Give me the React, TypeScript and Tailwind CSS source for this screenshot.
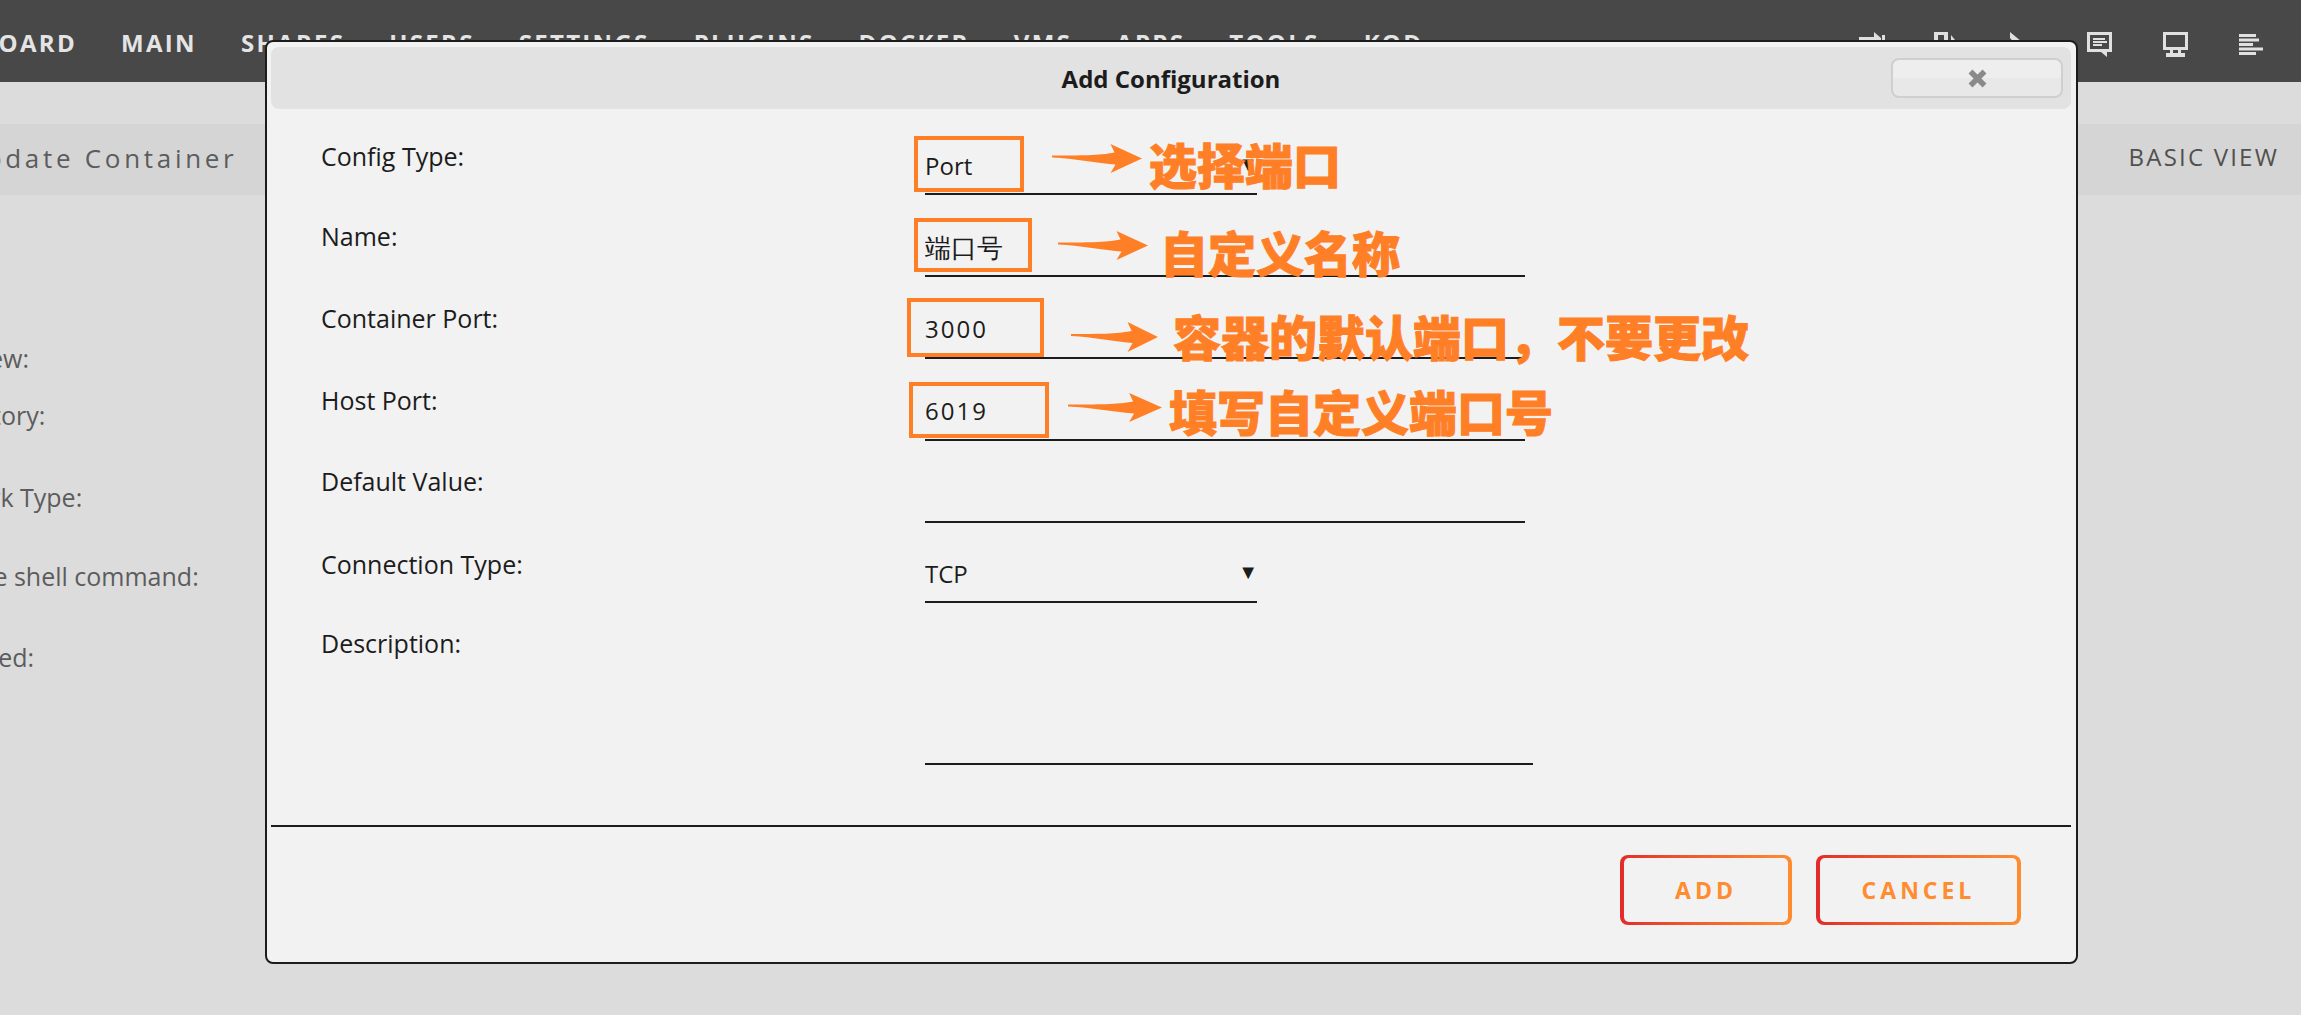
const navItems = ['DASHBOARD', 'MAIN', 'SHARES', 'USERS', 'SETTINGS', 'PLUGINS', 'DOCKER', 'VMS', 'APPS', 'TOOLS', 'KOD'];

const sans = 'font-["Open_Sans",sans-serif]';

function ChatIcon() {
  return (
    <svg width="25" height="25" viewBox="0 0 25 25" fill="#e0e0e0">
      <path fillRule="evenodd" d="M0 0h25v20h-5v5l-6-5H0zM3 3v14h19V3z" />
      <rect x="6" y="6" width="12" height="2" />
      <rect x="6" y="9" width="14" height="2" />
      <rect x="6" y="12" width="9" height="2" />
    </svg>
  );
}

function MonitorIcon() {
  return (
    <svg width="25" height="25" viewBox="0 0 25 25" fill="#e0e0e0">
      <path fillRule="evenodd" d="M0 0h25v18H0zM3 3v12h19V3z" />
      <rect x="7" y="18" width="3" height="3" />
      <rect x="15" y="18" width="3" height="3" />
      <rect x="3" y="21" width="19" height="4" />
    </svg>
  );
}

function AlignIcon() {
  return (
    <svg width="24" height="22" viewBox="0 0 24 22" fill="#e0e0e0">
      <rect x="0" y="0" width="17" height="3" />
      <rect x="0" y="4.5" width="20" height="3" />
      <rect x="0" y="9" width="14" height="3" />
      <rect x="0" y="13.5" width="24" height="3" />
      <rect x="0" y="18" width="17" height="3" />
    </svg>
  );
}

function SmallIcons() {
  return (
    <div className="flex items-start">
      <svg className="mt-[7px]" width="26" height="25" viewBox="0 0 26 25" fill="#e0e0e0">
        <path d="M0 5h15V0l7 6v4H0z" />
        <rect x="23" y="3" width="3" height="10" />
      </svg>
      <svg className="mt-[7px] ml-[49px]" width="21" height="25" viewBox="0 0 21 25" fill="#e0e0e0">
        <path fillRule="evenodd" d="M0 0h14v25H0zM4 3v22h6V3z" />
        <path d="M17 3l4 5v5h-4z" />
      </svg>
      <svg className="mt-[7px] ml-[55px]" width="12" height="25" viewBox="0 0 12 25" fill="#e0e0e0">
        <path d="M0 0l12 10v5H8L0 6z" />
      </svg>
    </div>
  );
}

type RowProps = {
  label: string;
  labelPad: string;
  rowHeight: string;
  lineWidth: string;
  value?: string;
  valueStyle?: string;
  caret?: boolean;
};

function FormRow({ label, labelPad, rowHeight, lineWidth, value, valueStyle, caret }: RowProps) {
  return (
    <div className={`flex ${rowHeight}`}>
      <div className={`w-[654px] shrink-0 pl-[50px] ${labelPad} text-[25px] leading-[30px] text-[#1c1c1c]`}>{label}</div>
      <div className={`relative flex h-full flex-col justify-end border-b-2 border-[#1c1c1c] ${lineWidth}`}>
        {value && <div className={`text-[24px] leading-[30px] text-[#1c1c1c] ${valueStyle}`}>{value}</div>}
        {caret && <span className="absolute right-[-1px] bottom-[19px] text-[20px] leading-5 text-[#1c1c1c]">▼</span>}
      </div>
    </div>
  );
}

function GradientButton({ label, width }: { label: string; width: string }) {
  return (
    <div className={`h-[70px] rounded-[8px] bg-linear-to-r from-[#e22b2b] to-[#ff8c2f] px-[4px] py-[3px] ${width}`}>
      <div className="flex h-full items-center justify-center rounded-[5px] bg-[#f2f2f2] text-[23px] font-bold tracking-[4px] text-[#ff8c2f]">
        {label}
      </div>
    </div>
  );
}

function Arrow({ className, w, h }: { className: string; w: number; h: number }) {
  const neck = w * 0.65;
  const mid = h / 2;
  return (
    <svg className={`absolute ${className}`} width={w} height={h} viewBox={`0 0 ${w} ${h}`} fill="#ff7f27">
      <path d={`M0 ${mid - 3}C${neck * 0.5} ${mid - 3} ${neck * 0.8} ${mid - 3} ${neck + 4} ${mid - 6}L${neck} 0L${w} ${mid}L${neck} ${h}L${neck + 5} ${mid + 6}C${neck * 0.7} ${mid + 4} ${neck * 0.4} ${mid} 0 ${mid - 1}Z`} />
    </svg>
  );
}

function Note({ className, text }: { className: string; text: string }) {
  return (
    <div className={`absolute font-["Noto_Sans_CJK_SC",sans-serif] font-black whitespace-nowrap text-[#ff7f27] [-webkit-text-stroke:1px_#ff7f27] ${className}`}>{text}</div>
  );
}

function OrangeBox({ className }: { className: string }) {
  return <div className={`absolute border-4 border-[#ff7f27] ${className}`} />;
}

export default function App() {
  return (
    <div className={`relative h-[1015px] w-[2301px] overflow-hidden bg-[#dcdcdc] ${sans}`}>
      {/* Top nav */}
      <div className="flex h-[82px] items-start overflow-hidden bg-[#484848] pt-[26px]">
        <div className="-ml-[95px] flex gap-[44px] text-[24px] leading-[34px] font-bold tracking-[2.3px] whitespace-nowrap text-[#e4e4e4]">
          {navItems.map((item) => (
            <span key={item}>{item}</span>
          ))}
        </div>
        <div className="ml-auto flex items-start pr-[38px]">
          <div className="-mt-[1px] mr-[65px]">
            <SmallIcons />
          </div>
          <div className="mt-[6px] flex items-start gap-[51px]">
            <ChatIcon />
            <MonitorIcon />
            <div className="mt-[2px]">
              <AlignIcon />
            </div>
          </div>
        </div>
      </div>

      {/* Page title band */}
      <div className="mt-[42px] flex h-[71px] items-center justify-between bg-[#d5d5d5] pr-[22px]">
        <span className="-mt-[3px] -ml-[37px] text-[26px] tracking-[3.7px] text-[#5c5c5c]">Update Container</span>
        <span className="-mt-[6px] text-[24px] tracking-[2.2px] text-[#505050]">BASIC VIEW</span>
      </div>

      {/* Template form behind the dialog */}
      <div className="-ml-[86px] flex flex-col pt-[148px] text-[25px] leading-[30px] text-[#5c5c5c]">
        <span className="mb-[27px]">Overview:</span>
        <span className="mb-[52px]">Repository:</span>
        <span className="mb-[49px]">Network Type:</span>
        <span className="mb-[51px]">Console shell command:</span>
        <span>Privileged:</span>
      </div>

      {/* Dialog */}
      <div className="absolute top-[40px] left-[265px] h-[924px] w-[1813px] rounded-[8px] border-2 border-[#1c1c1c] bg-[#f2f2f2] p-[4px] pr-[5px]">
        <div className="relative mt-[1px] flex h-[62px] items-center justify-center rounded-[8px] bg-[#e2e2e2] pt-[2px] text-[24px] font-bold text-[#1c1c1c]">
          Add Configuration
          <button className="absolute top-[11px] right-[8px] flex h-[40px] w-[172px] items-center justify-center rounded-[8px] border-2 border-[#cfcfcf] bg-linear-to-b from-[#eeeeee] from-50% to-[#e8e8e8] to-50%">
            <svg width="19" height="19" viewBox="0 0 19 19" fill="none" stroke="#8a8a8a" strokeWidth="5.5">
              <path d="M2.5 2.5l14 14M16.5 2.5l-14 14" />
            </svg>
          </button>
        </div>

        <div className="pt-[4px]">
          <FormRow label="Config Type:" labelPad="pt-[28px]" rowHeight="h-[82px]" lineWidth="w-[332px]" value="Port" valueStyle="mb-[12px]" caret />
          <FormRow label="Name:" labelPad="pt-[26px]" rowHeight="h-[82px]" lineWidth="w-[600px]" value="端口号" valueStyle="mb-[13px] text-[26px]" />
          <FormRow label="Container Port:" labelPad="pt-[26px]" rowHeight="h-[82px]" lineWidth="w-[600px]" value="3000" valueStyle="mb-[13px] tracking-[2px]" />
          <FormRow label="Host Port:" labelPad="pt-[26px]" rowHeight="h-[82px]" lineWidth="w-[600px]" value="6019" valueStyle="mb-[13px] tracking-[2px]" />
          <FormRow label="Default Value:" labelPad="pt-[25px]" rowHeight="h-[82px]" lineWidth="w-[600px]" />
          <FormRow label="Connection Type:" labelPad="pt-[26px]" rowHeight="h-[80px]" lineWidth="w-[332px]" value="TCP" valueStyle="mb-[12px]" caret />
          <FormRow label="Description:" labelPad="pt-[25px]" rowHeight="h-[162px]" lineWidth="w-[608px]" />
        </div>

        <div className="mt-[60px] h-[2px] bg-[#1c1c1c]" />

        <div className="flex justify-end gap-[24px] pt-[28px] pr-[50px]">
          <GradientButton label="ADD" width="w-[172px]" />
          <GradientButton label="CANCEL" width="w-[205px]" />
        </div>
      </div>

      {/* Annotations drawn over the screenshot */}
      <OrangeBox className="top-[136px] left-[914px] h-[56px] w-[110px]" />
      <OrangeBox className="top-[218px] left-[914px] h-[54px] w-[118px]" />
      <OrangeBox className="top-[298px] left-[907px] h-[59px] w-[137px]" />
      <OrangeBox className="top-[382px] left-[909px] h-[56px] w-[140px]" />

      <Arrow className="top-[144px] left-[1052px]" w={90} h={29} />
      <Arrow className="top-[231px] left-[1058px]" w={90} h={29} />
      <Arrow className="top-[322px] left-[1071px]" w={87} h={30} />
      <Arrow className="top-[393px] left-[1068px]" w={94} h={29} />

      <Note className="top-[128px] left-[1149px] text-[48px] leading-[70px]" text="选择端口" />
      <Note className="top-[216px] left-[1160px] text-[48px] leading-[70px]" text="自定义名称" />
      <Note className="top-[300px] left-[1173px] text-[48px] leading-[70px]" text="容器的默认端口，不要更改" />
      <Note className="top-[375px] left-[1169px] text-[48px] leading-[70px]" text="填写自定义端口号" />
    </div>
  );
}
